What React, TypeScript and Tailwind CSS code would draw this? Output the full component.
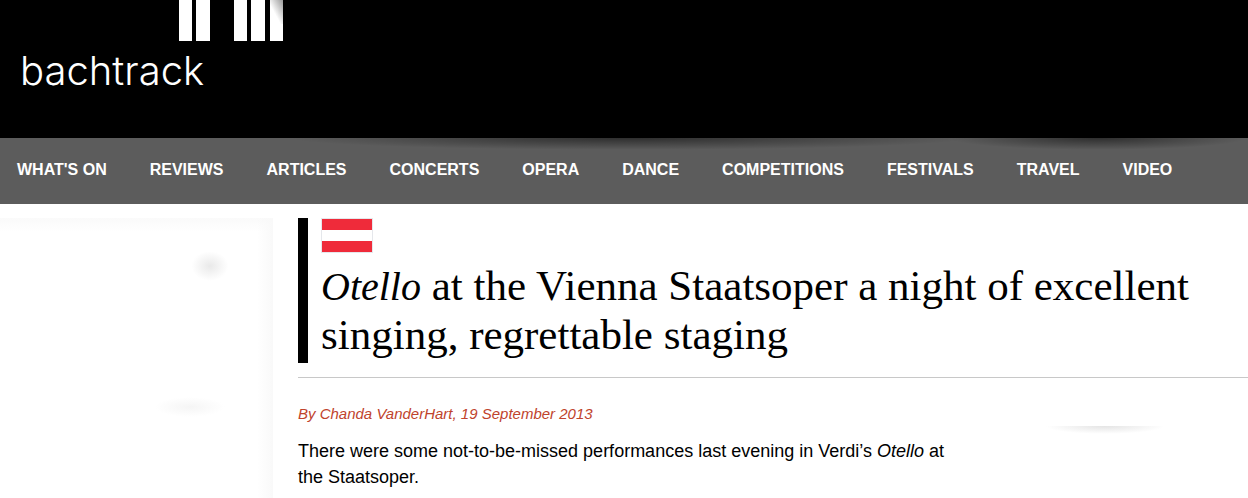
import React from 'react'

const navItems = [
  "What's on",
  'Reviews',
  'Articles',
  'Concerts',
  'Opera',
  'Dance',
  'Competitions',
  'Festivals',
  'Travel',
  'Video',
]

const PianoKeys = () => (
  <svg width="104" height="41" viewBox="0 0 104 41" fill="white" aria-hidden="true">
    <defs>
      <linearGradient id="keyShade" x1="0" y1="1" x2="1" y2="0">
        <stop offset="0.4" stopColor="#ffffff" />
        <stop offset="1" stopColor="#999999" />
      </linearGradient>
    </defs>
    <rect x="0" y="0" width="13" height="41" />
    <rect x="17" y="0" width="14" height="41" />
    <rect x="55" y="0" width="13" height="41" />
    <rect x="72" y="0" width="14" height="41" />
    <rect x="91" y="0" width="13" height="41" />
    <rect x="91" y="0" width="13" height="24" fill="url(#keyShade)" />
  </svg>
)

const AustriaFlag = () => (
  <div className="flex flex-col w-[52px] h-[35px] border border-gray-200" role="img" aria-label="Austria">
    <div className="flex-1 bg-[#ef2b3a]" />
    <div className="flex-1 bg-white" />
    <div className="flex-1 bg-[#ef2b3a]" />
  </div>
)

const Header = () => (
  <header>
    <div className="bg-black h-[138px]">
      <a href="#" className="inline-block">
        <span className="block pl-[179px]">
          <PianoKeys />
        </span>
        <span className="block pl-5 pt-2 font-['Inter'] font-light text-[40px] leading-[44px] text-white">
          bachtrack
        </span>
      </a>
    </div>
    <nav className="relative flex items-center gap-[43px] h-[66px] px-[17px] pb-[3px] bg-[#5c5c5c]">
      <div className="absolute top-0 left-[23%] right-[22%] h-3 bg-[radial-gradient(ellipse_at_top,#00000080,transparent_70%)]" />
      <div className="absolute top-0 left-[76%] right-0 h-3 bg-[radial-gradient(ellipse_at_top,#00000080,transparent_70%)]" />
      {navItems.map((item) => (
        <a key={item} href="#" className="relative uppercase font-bold text-base whitespace-nowrap text-white">
          {item}
        </a>
      ))}
    </nav>
  </header>
)

const Article = () => (
  <article className="flex-1 min-w-0">
    <div className="border-l-10 border-black pl-[13px] pb-1">
      <AustriaFlag />
      <h1 className="pt-2 font-['Liberation_Serif',serif] text-[43px] leading-[49px]">
        <em className="text-[40px] leading-none">Otello</em> at the Vienna Staatsoper a night of excellent singing, regrettable staging
      </h1>
    </div>
    <hr className="mt-[14px] border-[#c8c8c8]" />
    <div className="flex">
      <div className="w-[650px] pt-6">
        <p className="italic text-[15px] leading-6 text-[#c0432c]">
          By Chanda VanderHart, 19 September 2013
        </p>
        <p className="pt-3 text-[18px] leading-[26px]">
          There were some not-to-be-missed performances last evening in Verdi’s <em className="leading-none">Otello</em> at the Staatsoper.
        </p>
      </div>
      <aside className="flex-1 mt-12 ml-[25px] h-[72px]">
        <div className="ml-[72px] w-[120px] h-2 bg-[radial-gradient(ellipse_at_top,#e4e4e4,transparent_70%)]" />
      </aside>
    </div>
  </article>
)

const App = () => {
  return (
    <div className="bg-white text-black font-['Liberation_Sans',sans-serif]">
      <Header />
      <main className="flex pt-[14px]">
        <aside className="w-[273px] mr-[25px] h-[280px] shrink-0 bg-[linear-gradient(to_left,#f9f9f9,transparent_16px),linear-gradient(to_bottom,#fafafa,transparent_14px)]">
          <div className="ml-[190px] pt-8">
            <div className="w-10 h-8 bg-[radial-gradient(ellipse_at_center,#e9e9e9,transparent_65%)]" />
          </div>
          <div className="ml-[155px] pt-[115px]">
            <div className="w-[70px] h-5 bg-[radial-gradient(ellipse_at_center,#f5f5f5,transparent_70%)]" />
          </div>
        </aside>
        <Article />
      </main>
    </div>
  )
}

export default App
